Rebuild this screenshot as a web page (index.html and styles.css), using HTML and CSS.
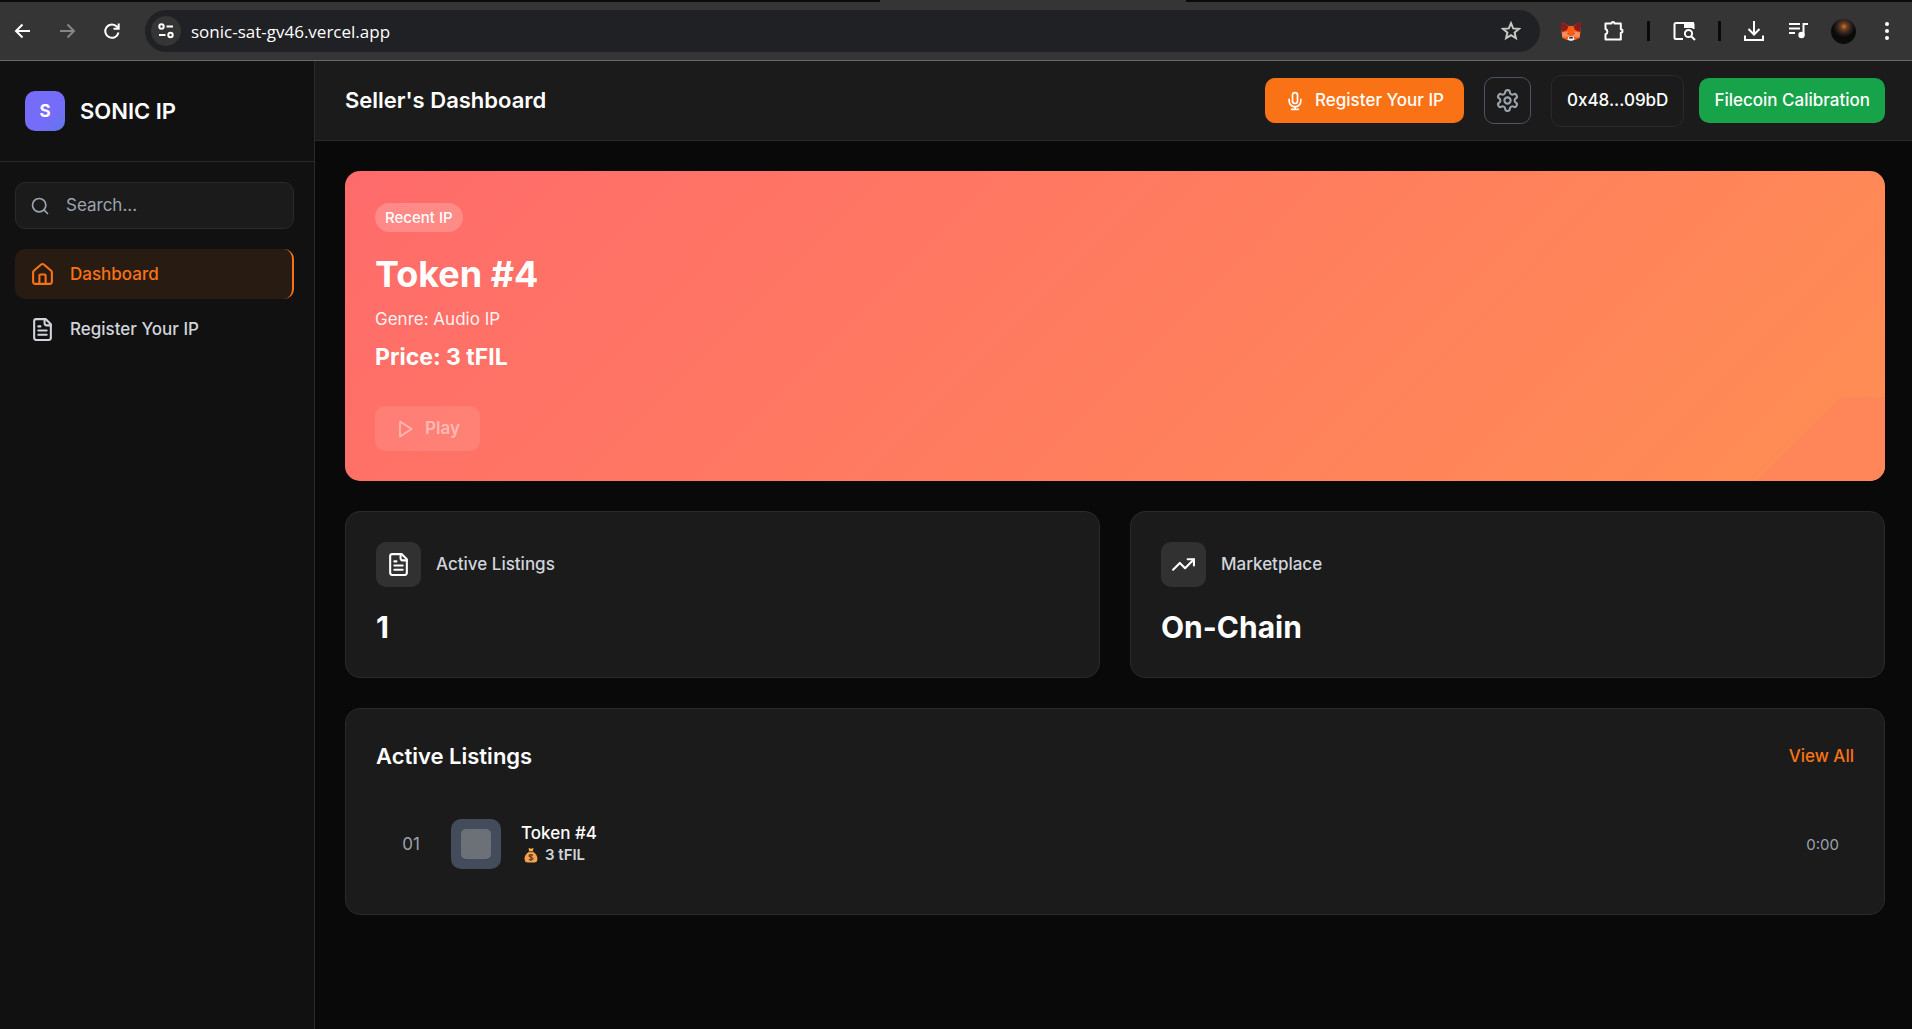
FILE: index.html
```html
<!DOCTYPE html>
<html lang="en">

<head>
	<meta charset="utf-8">
	<title>Sonic IP</title>
	<link rel="stylesheet" href="styles.css">
</head>

<body>
	<!-- browser bar -->
	<div class="tabstrip"><span class="tab"></span></div>
	<div class="browser">
		<div class="nav-btns">
			<button class="bbtn" aria-label="Back"><svg width="20" height="20" viewBox="0 0 20 20"><path d="M18 10H4M10.500 3.500L4 10l6.500 6.500"/></svg></button>
			<button class="bbtn dim" aria-label="Forward"><svg width="20" height="20" viewBox="0 0 20 20"><path d="M3 10h14M10.500 3.500l6.500 6.500-6.500 6.500"/></svg></button>
			<button class="bbtn" aria-label="Reload"><svg width="20" height="20" viewBox="0 0 20 20"><path d="M16.500 11.500a6.700 6.700 0 1 1-1.500-5.800l1.500 1.800M16.700 2.500v5.200h-5.200"/></svg></button>
		</div>
		<div class="address">
			<button class="site-info" aria-label="Site information"><svg width="18" height="18" viewBox="0 0 18 18"><circle cx="4.500" cy="4.500" r="2.200"/><path d="M9.500 4.500H16M2 13h6.500"/><circle cx="13.500" cy="13" r="2.200"/></svg></button>
			<input class="url" type="text" aria-label="Address" value="sonic-sat-gv46.vercel.app">
			<button class="star" aria-label="Bookmark"><svg width="20" height="20" viewBox="0 0 20 20"><path d="M10 2.200l2.200 5.200 5.700.5-4.300 3.700 1.300 5.500-4.900-3-4.900 3 1.300-5.500L2.100 7.900l5.700-.5z"/></svg></button>
		</div>
		<div class="extensions">
			<button class="bbtn" aria-label="Wallet extension"><svg class="fox" width="20" height="20" viewBox="0 0 20 20"><path fill="#ff5c16" d="M1 1l7 4h4l7-4 .5 10-1 6-4.500 2H6l-4.500-2-1-6z"/><path fill="#8a1c1c" d="M.5.5l7 4.500-1.500 4L1 11 .2 6zM19.500.5l-7 4.500 1.500 4 5 2 .8-5z"/><path fill="#ff8d5d" d="M1 11.500l6-1 1 5-6.500 1zM19 11.500l-6-1-1 5 6.500 1z"/><path fill="#e8eef4" d="M7.500 15.500h5l1 3-2 1.200h-3l-2-1.200z"/><path fill="#26303a" d="M5.500 11.500l2.200 1-.2.900zM14.500 11.500l-2.200 1 .2.900zM8.500 16h3l.5 1.500H8z"/></svg></button>
			<button class="bbtn" aria-label="Extensions"><svg width="22" height="22" viewBox="0 0 22 22"><path stroke-linejoin="round" d="M3 3.500h5.500a1.500 1.500 0 0 1 3 0h6.300V9.300a1.700 1.700 0 0 1 0 3.400v6.800H2.500v-5.200a2.800 2.800 0 0 0 0-5.300V3.500z"/></svg></button>
			<span class="sep"></span>
			<button class="bbtn" aria-label="Tab search"><svg width="24" height="22" viewBox="0 0 24 22"><path d="M11 19H4a1.500 1.500 0 0 1-1.500-1.500v-13A1.500 1.500 0 0 1 4 3h16a1.500 1.500 0 0 1 1.500 1.500V9"/><path fill="currentColor" d="M13 3h8v4h-8z"/><circle cx="16.500" cy="13.500" r="3.600"/><path d="M19 16l4 4"/></svg></button>
			<span class="sep"></span>
			<button class="bbtn" aria-label="Downloads"><svg width="22" height="22" viewBox="0 0 22 22"><path d="M11 1v13M5.500 9L11 14.500 16.500 9M2 15.500V20h18v-4.500"/></svg></button>
			<button class="bbtn" aria-label="Media"><svg width="22" height="22" viewBox="0 0 22 22"><path d="M2 4h11M2 8.500h11M2 13h6M16.500 15V4H21"/><circle cx="14.500" cy="15" r="2.200" fill="currentColor"/></svg></button>
			<button class="bbtn" aria-label="Profile"><span class="avatar"></span></button>
			<button class="bbtn more" aria-label="Menu"><svg class="dots" width="6" height="20" viewBox="0 0 6 20"><circle cx="3" cy="3" r="2"/><circle cx="3" cy="10" r="2"/><circle cx="3" cy="17" r="2"/></svg></button>
		</div>
	</div>

	<div class="app">
		<aside class="sidebar">
			<div class="brand">
				<div class="logo">S</div>
				<span class="brand-name">SONIC IP</span>
			</div>
			<div class="side-body">
				<label class="search">
					<svg class="icon" width="20" height="20" viewBox="0 0 24 24"><circle cx="11" cy="11" r="8"/><path d="m21 21-4.300-4.300"/></svg>
					<input type="text" placeholder="Search..." aria-label="Search">
				</label>
				<nav class="menu">
					<a class="menu-item active" href="#">
						<svg class="icon" width="25" height="25" viewBox="0 0 24 24"><path d="M15 21v-8a1 1 0 0 0-1-1h-4a1 1 0 0 0-1 1v8"/><path d="M3 10a2 2 0 0 1 .709-1.528l7-5.999a2 2 0 0 1 2.582 0l7 5.999A2 2 0 0 1 21 10v9a2 2 0 0 1-2 2H5a2 2 0 0 1-2-2z"/></svg>
						Dashboard
					</a>
					<a class="menu-item" href="#">
						<svg class="icon" width="25" height="25" viewBox="0 0 24 24"><path d="M15 2H6a2 2 0 0 0-2 2v16a2 2 0 0 0 2 2h12a2 2 0 0 0 2-2V7Z"/><path d="M14 2v4a2 2 0 0 0 2 2h4M10 9H8M16 13H8M16 17H8"/></svg>
						Register Your IP
					</a>
				</nav>
			</div>
		</aside>

		<div class="content">
			<header class="topbar">
				<h1>Seller's Dashboard</h1>
				<div class="actions">
					<button class="btn btn-orange">
						<svg class="icon" width="20" height="20" viewBox="0 0 24 24"><path d="M12 2a3 3 0 0 0-3 3v7a3 3 0 0 0 6 0V5a3 3 0 0 0-3-3Z"/><path d="M19 10v2a7 7 0 0 1-14 0v-2M12 19v3M8 22h8"/></svg>
						Register Your IP
					</button>
					<button class="gear" aria-label="Settings">
						<svg class="icon" width="25" height="25" viewBox="0 0 24 24"><path d="M12.220 2h-.44a2 2 0 0 0-2 2v.18a2 2 0 0 1-1 1.730l-.43.25a2 2 0 0 1-2 0l-.15-.08a2 2 0 0 0-2.730.73l-.22.38a2 2 0 0 0 .73 2.730l.15.1a2 2 0 0 1 1 1.720v.51a2 2 0 0 1-1 1.740l-.15.09a2 2 0 0 0-.73 2.730l.22.38a2 2 0 0 0 2.730.73l.15-.08a2 2 0 0 1 2 0l.43.25a2 2 0 0 1 1 1.730V20a2 2 0 0 0 2 2h.44a2 2 0 0 0 2-2v-.18a2 2 0 0 1 1-1.730l.43-.25a2 2 0 0 1 2 0l.15.08a2 2 0 0 0 2.730-.73l.22-.39a2 2 0 0 0-.73-2.730l-.15-.08a2 2 0 0 1-1-1.740v-.5a2 2 0 0 1 1-1.740l.15-.09a2 2 0 0 0 .73-2.730l-.22-.38a2 2 0 0 0-2.730-.73l-.15.08a2 2 0 0 1-2 0l-.43-.25a2 2 0 0 1-1-1.730V4a2 2 0 0 0-2-2z"/><circle cx="12" cy="12" r="3"/></svg>
					</button>
					<div class="wallet-group">
						<button class="wallet">0x48...09bD</button>
						<button class="btn btn-green">Filecoin Calibration</button>
					</div>
				</div>
			</header>

			<main class="main">
				<section class="hero">
					<span class="pill">Recent IP</span>
					<h2>Token #4</h2>
					<p class="genre">Genre: Audio IP</p>
					<p class="price">Price: 3 tFIL</p>
					<button class="play" disabled>
						<svg class="icon" width="20" height="20" viewBox="0 0 24 24"><path d="M6 3l14 9-14 9z"/></svg>
						Play
					</button>
				</section>

				<section class="stats">
					<div class="card">
						<div class="stat-head">
							<span class="stat-icon"><svg class="icon" width="25" height="25" viewBox="0 0 24 24"><path d="M15 2H6a2 2 0 0 0-2 2v16a2 2 0 0 0 2 2h12a2 2 0 0 0 2-2V7Z"/><path d="M14 2v4a2 2 0 0 0 2 2h4M10 9H8M16 13H8M16 17H8"/></svg></span>
							Active Listings
						</div>
						<div class="stat-value">1</div>
					</div>
					<div class="card">
						<div class="stat-head">
							<span class="stat-icon"><svg class="icon" width="25" height="25" viewBox="0 0 24 24"><path d="M22 7l-8.500 8.500-5-5L2 17"/><path d="M16 7h6v6"/></svg></span>
							Marketplace
						</div>
						<div class="stat-value">On-Chain</div>
					</div>
				</section>

				<section class="card">
					<div class="list-head">
						<h3>Active Listings</h3>
						<a href="#">View All</a>
					</div>
					<div class="track">
						<span class="num">01</span>
						<span class="cover"><span class="cover-inner"></span></span>
						<div class="track-info">
							<div class="track-name">Token #4</div>
							<div class="track-price">
								<svg width="16" height="16" viewBox="0 0 16 16"><path fill="#f9a04e" d="M5.500 5h5c3 2 4.500 5 3.800 8-.4 1.800-1.300 2.500-3 2.500H4.700c-1.700 0-2.600-.7-3-2.500-.7-3 .8-6 3.800-8z"/><path fill="#f9b54e" d="M5.500 1l2.500.7L10.500 1l-.7 3H6.200z"/><path fill="#7a4b22" d="M5.500 4h5v1.300h-5z"/><path fill="none" stroke="#5c4020" stroke-width="1.200" d="M10 8.300c-1-1-4-.8-4 .7s4 1 4 2.500-3 1.700-4 .6M8 7v7"/></svg>
								3 tFIL
							</div>
						</div>
						<span class="time">0:00</span>
					</div>
				</section>
			</main>
		</div>
	</div>
</body>

</html>
```
FILE: styles.css
```css
* {
	box-sizing: border-box;
}

body {
	margin: 0;
	min-height: 100vh;
	display: flex;
	flex-direction: column;
	background-color: #090909;
	color: white;
	font-family: Inter, sans-serif;
	font-size: 17px;
	line-height: 25px;
}

h1, h2, h3, p {
	margin: 0;
}

button, input {
	font: inherit;
	color: inherit;
}

button {
	padding: 0;
	border: 0;
	background: none;
}

a {
	color: inherit;
	text-decoration: none;
}

svg {
	display: block;
	flex-shrink: 0;
	fill: none;
	stroke: currentColor;
	stroke-width: 2;
}

.icon {
	stroke-linecap: round;
	stroke-linejoin: round;
}

/* browser bar */
.tabstrip {
	height: 2px;
	padding-left: 46%;
	background-color: #0a0a0a;
}

.tab {
	display: block;
	width: 306px;
	height: 2px;
	background-color: #353535;
}

.browser {
	display: flex;
	align-items: center;
	height: 59px;
	padding: 0 16px 0 12px;
	border-bottom: 1px solid #6a6a6a;
	background-color: #353535;
}

.nav-btns {
	display: flex;
	gap: 25px;
	width: 133px;
}

.bbtn {
	display: flex;
	justify-content: center;
}

.dim {
	color: #868686;
}

.address {
	flex: 1;
	display: flex;
	align-items: center;
	gap: 10px;
	height: 42px;
	padding: 0 19px 0 6px;
	border-radius: 21px;
	background-color: #202124;
}

.site-info {
	display: flex;
	align-items: center;
	justify-content: center;
	width: 30px;
	height: 30px;
	border-radius: 50%;
	background-color: #353535;
}

.url {
	flex: 1;
	padding: 0;
	border: 0;
	outline: 0;
	background: none;
	font-family: "Open Sans", sans-serif;
	font-size: 17px;
}

.star {
	color: #c8c8c0;
}

.extensions {
	display: flex;
	align-items: center;
	gap: 22px;
	padding-left: 21px;
}

.fox {
	stroke: none;
}

.sep {
	width: 3px;
	height: 20px;
	background-color: #0a0a0a;
}

.avatar {
	width: 25px;
	height: 25px;
	border-radius: 50%;
	background: radial-gradient(circle at 52% 30%, #d8702c 0, #6b3d20 15%, #33261f 30%, #0a0a0a 50%);
}

.more {
	width: 18px;
}

.dots {
	fill: white;
	stroke: none;
}

/* sidebar */
.app {
	flex: 1;
	display: flex;
}

.sidebar {
	width: 315px;
	flex-shrink: 0;
	border-right: 1px solid #2a2a2a;
	background-color: #111;
}

.brand {
	display: flex;
	align-items: center;
	gap: 15px;
	height: 101px;
	padding: 0 25px;
	border-bottom: 1px solid #2a2a2a;
}

.logo {
	width: 40px;
	height: 40px;
	border-radius: 10px;
	background: linear-gradient(135deg, #766cfa 60%, #5f78e8);
	font-weight: 700;
	line-height: 40px;
	text-align: center;
}

.brand-name {
	font-size: 22px;
	font-weight: 600;
}

.side-body {
	padding: 20px 20px 20px 15px;
}

.search {
	display: flex;
	align-items: center;
	gap: 16px;
	height: 47px;
	margin-bottom: 20px;
	padding: 0 14px;
	border: 1px solid #2a2a2a;
	border-radius: 10px;
	background-color: #1b1b1b;
	color: #9ca3af;
}

.search input {
	width: 100%;
	padding: 0;
	border: 0;
	outline: 0;
	background: none;
}

.search input::placeholder {
	color: #9ca3af;
}

.menu {
	display: flex;
	flex-direction: column;
	gap: 5px;
}

.menu-item {
	display: flex;
	align-items: center;
	gap: 15px;
	height: 50px;
	padding: 0 15px;
	border-radius: 10px;
	color: #d1d5db;
	font-weight: 500;
}

.active {
	border-right: 2px solid #f97316;
	background-color: #281b12;
	color: #f97316;
}

/* top bar */
.content {
	flex: 1;
	min-width: 0;
}

.topbar {
	display: flex;
	align-items: center;
	justify-content: space-between;
	height: 80px;
	padding: 0 27px 0 30px;
	border-bottom: 1px solid #2a2a2a;
	background-color: #1b1b1b;
}

h1, h3 {
	font-size: 22px;
	font-weight: 600;
}

.actions {
	display: flex;
	align-items: center;
	gap: 20px;
}

.wallet-group {
	display: flex;
	align-items: center;
	gap: 15px;
}

.btn {
	display: flex;
	align-items: center;
	gap: 10px;
	height: 45px;
	border-radius: 10px;
	font-weight: 500;
}

.btn-orange {
	padding: 0 20px;
	background-color: #f97316;
}

.btn-green {
	padding: 0 15px;
	background-color: #16a34a;
}

.gear {
	display: flex;
	align-items: center;
	justify-content: center;
	width: 47px;
	height: 47px;
	border: 1px solid #4b5563;
	border-radius: 10px;
	color: #9ca3af;
}

.wallet {
	height: 52px;
	padding: 0 15px;
	border: 1px solid #2a2a2a;
	border-radius: 10px;
	font-weight: 500;
}

/* main */
.main {
	display: flex;
	flex-direction: column;
	gap: 30px;
	padding: 30px 27px 30px 30px;
}

.hero {
	position: relative;
	padding: 32px 30px 30px;
	border-radius: 15px;
	overflow: hidden;
	background: linear-gradient(135deg, #ff6b6b, #ff8e53);
}

/* darker facet in the lower right corner */
.hero::after {
	content: "";
	position: absolute;
	right: 0;
	bottom: 0;
	width: 129px;
	height: 84px;
	background-color: #ff8659;
	clip-path: polygon(66% 0, 100% 0, 100% 100%, 0 100%);
}

.pill {
	display: block;
	width: fit-content;
	height: 29px;
	padding: 0 10px;
	border-radius: 15px;
	background-color: rgba(255, 255, 255, .2);
	font-size: 15px;
	font-weight: 500;
	line-height: 29px;
}

.hero h2 {
	margin: 20px 0 10px;
	font-size: 36px;
	line-height: 45px;
}

.genre {
	margin-bottom: 10px;
	opacity: .9;
}

.price {
	font-size: 23px;
	font-weight: 700;
	line-height: 30px;
}

.play {
	display: flex;
	align-items: center;
	gap: 10px;
	height: 45px;
	margin-top: 34px;
	padding: 0 20px;
	border-radius: 10px;
	background-color: rgba(255, 255, 255, .2);
	font-weight: 600;
	opacity: .5;
}

.stats {
	display: grid;
	grid-template-columns: 1fr 1fr;
	gap: 30px;
}

.card {
	padding: 30px;
	border: 1px solid #2a2a2a;
	border-radius: 15px;
	background-color: #1b1b1b;
}

.stat-head {
	display: flex;
	align-items: center;
	gap: 15px;
	color: #d1d5db;
	font-weight: 500;
}

.stat-icon {
	display: flex;
	align-items: center;
	justify-content: center;
	width: 45px;
	height: 45px;
	border-radius: 10px;
	background-color: #313131;
	color: white;
}

.stat-value {
	margin-top: 20px;
	font-size: 30px;
	font-weight: 700;
	line-height: 40px;
}

.list-head {
	display: flex;
	align-items: center;
	justify-content: space-between;
	height: 35px;
	margin-bottom: 30px;
}

.list-head a {
	color: #f97316;
	font-weight: 500;
}

.track {
	display: flex;
	align-items: center;
	height: 80px;
	padding: 0 15px;
}

.num {
	width: 40px;
	text-align: center;
	color: #9ca3af;
}

.cover {
	width: 50px;
	height: 50px;
	margin: 0 20px;
	padding: 10px;
	border-radius: 10px;
	background-color: #434c5a;
}

.cover-inner {
	display: block;
	height: 30px;
	border-radius: 5px;
	background-color: #6c7177;
}

.track-info {
	flex: 1;
}

.track-name {
	font-weight: 500;
	line-height: 22px;
}

.track-price {
	display: flex;
	align-items: center;
	gap: 6px;
	color: #d1d5db;
	font-size: 15px;
	font-weight: 600;
	line-height: 22px;
}

.track-price svg {
	margin-left: 2px;
	stroke: none;
}

.time {
	color: #9ca3af;
	font-size: 15px;
}
```
